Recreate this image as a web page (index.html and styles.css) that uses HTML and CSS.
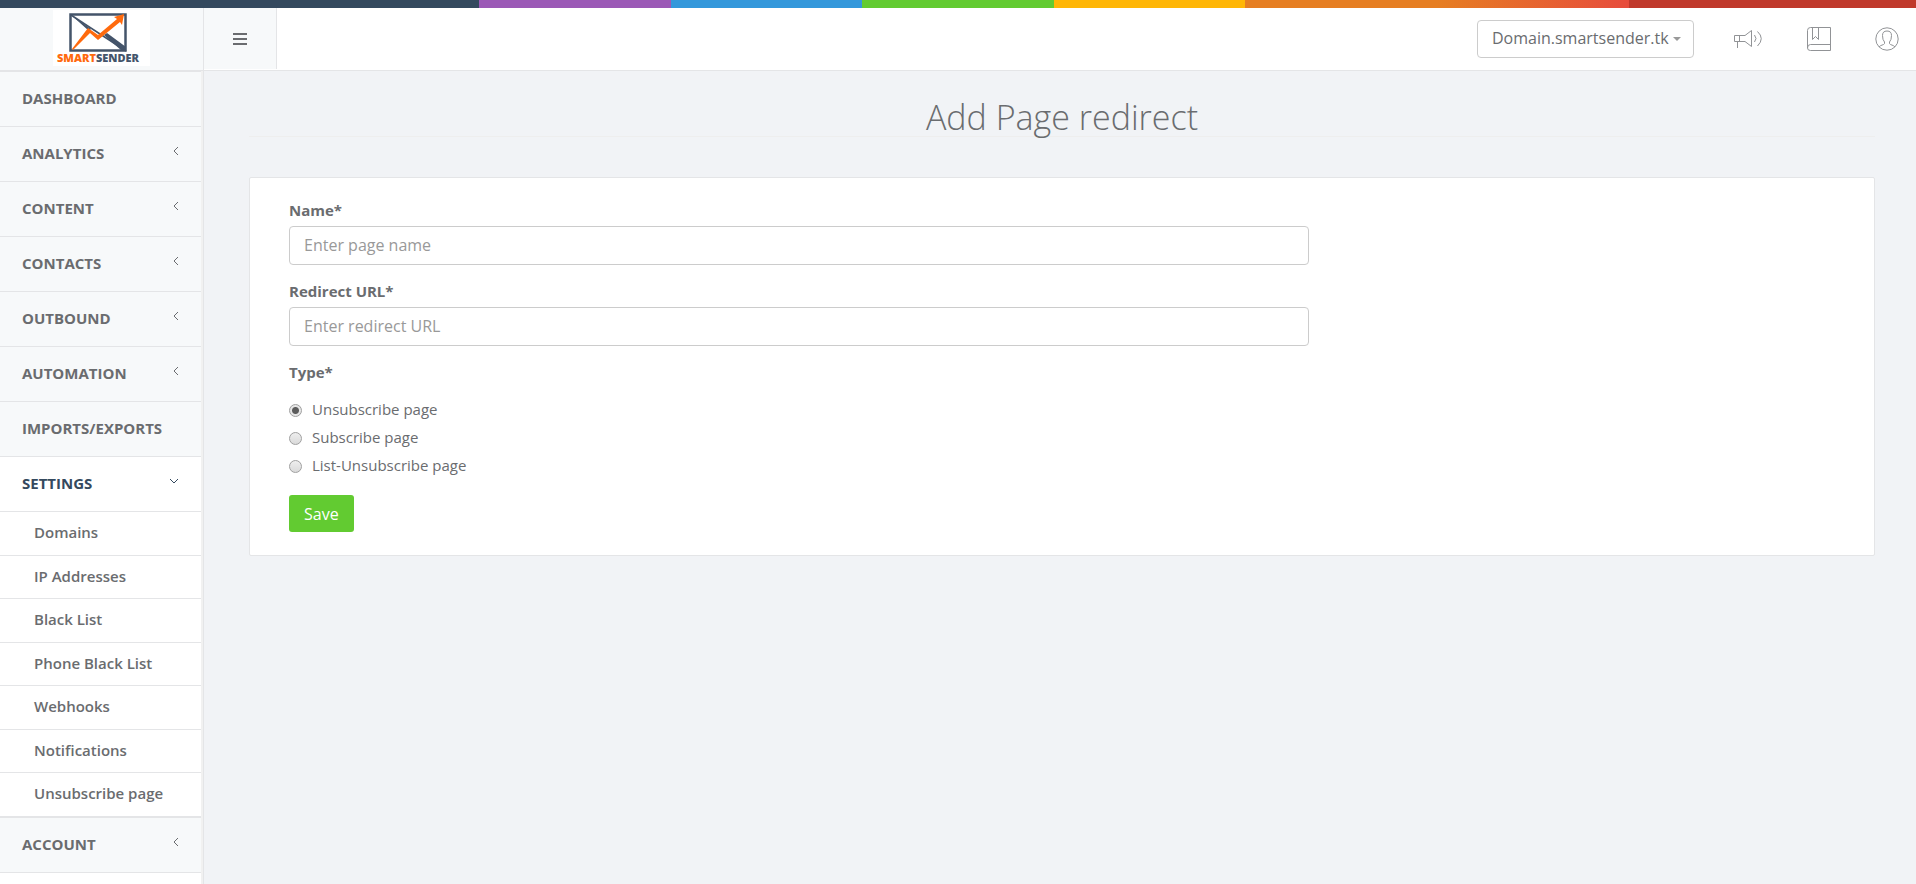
FILE: index.html
```
<!DOCTYPE html>
<html lang="en">
<head>
    <meta charset="UTF-8">
    <meta name="viewport" content="width=device-width, initial-scale=1.0">
    <title>Add Page redirect</title>
    <link rel="stylesheet" href="styles.css">
</head>
<body>

    <div class="color-line"></div>

    <header class="header">
        <a href="#" class="logo" aria-label="SmartSender">
            <svg width="97" height="56" viewBox="0 0 97 56">
                <rect width="97" height="56" fill="#fff"/>
                <path d="M18 5 L73 41" stroke="#44546a" stroke-width="1.5"/>
                <path d="M17 4 L38 19 L36 21 Z M51 25 L54 23 L73 37 V41 H69 Z" fill="#44546a"/>
                <rect x="17.500" y="4.500" width="55" height="36" fill="none" stroke="#44546a" stroke-width="2.500"/>
                <path d="M19 39 L35 18 L45 25 L64 9 L61 7 L71 4 L69 15 L67 12 L45 30 L37 23 L20 40 Z" fill="#ff6a0d"/>
                <text x="4" y="52" class="logo-text"><tspan fill="#ff6a0d">SMART</tspan><tspan fill="#44546a">SENDER</tspan></text>
            </svg>
        </a>
        <button type="button" class="menu-toggle" aria-label="Toggle menu">
            <svg width="14" height="12" viewBox="0 0 14 12" fill="#6a6c6f">
                <path d="M0 0h14v2H0zM0 5h14v2H0zM0 10h14v2H0z"/>
            </svg>
        </button>
        <nav class="header-nav">
            <div class="domain">
                <select class="domain-select" aria-label="Domain">
                    <option>Domain.smartsender.tk</option>
                </select>
            </div>
            <a href="#" class="nav-icon" aria-label="News">
                <svg width="30" height="24" viewBox="0 0 30 24">
                    <path d="M1.500 8.500H12L18.500 3.500V19.500L12 14.500H1.500ZM6.500 8.500V14.500M4.500 14.500V21M21.500 8Q24.500 11.500 21.500 15M24.500 4.500Q32 11.500 24.500 19"/>
                </svg>
            </a>
            <a href="#" class="nav-icon" aria-label="Documentation">
                <svg width="24" height="24" viewBox="0 0 24 24">
                    <path d="M23.500 18V.5H3.500Q.5 .5 .5 3.500V21Q.5 23.500 3.500 23.500H23.500V17.500H3.500Q.5 17.500 .5 21M5.500 .5V12.500L8.500 9.500L11.500 12.500V.5"/>
                </svg>
            </a>
            <a href="#" class="nav-icon" aria-label="Profile">
                <svg width="24" height="24" viewBox="0 0 24 24">
                    <circle cx="12" cy="12" r="11.200"/>
                    <path d="M4 20Q5 18.500 8.500 17.500Q10 17 9.500 15Q7.500 13 7.500 8.500Q7.500 4 12 4Q16.500 4 16.500 8.500Q16.500 13 14.500 15Q14 17 15.500 17.500Q19 18.500 20 20"/>
                </svg>
            </a>
        </nav>
    </header>

    <div class="wrapper">
        <aside class="sidebar">
            <ul class="menu">
                <li><a href="#">DASHBOARD</a></li>
                <li><a href="#">ANALYTICS <svg class="arrow" viewBox="0 0 10 10"><path d="M7 1L3 5L7 9"/></svg></a></li>
                <li><a href="#">CONTENT <svg class="arrow" viewBox="0 0 10 10"><path d="M7 1L3 5L7 9"/></svg></a></li>
                <li><a href="#">CONTACTS <svg class="arrow" viewBox="0 0 10 10"><path d="M7 1L3 5L7 9"/></svg></a></li>
                <li><a href="#">OUTBOUND <svg class="arrow" viewBox="0 0 10 10"><path d="M7 1L3 5L7 9"/></svg></a></li>
                <li><a href="#">AUTOMATION <svg class="arrow" viewBox="0 0 10 10"><path d="M7 1L3 5L7 9"/></svg></a></li>
                <li><a href="#">IMPORTS/EXPORTS</a></li>
                <li class="active">
                    <a href="#">SETTINGS <svg class="arrow" viewBox="0 0 10 10"><path d="M-1 3L3 7L7 3"/></svg></a>
                    <ul class="submenu">
                        <li><a href="#">Domains</a></li>
                        <li><a href="#">IP Addresses</a></li>
                        <li><a href="#">Black List</a></li>
                        <li><a href="#">Phone Black List</a></li>
                        <li><a href="#">Webhooks</a></li>
                        <li><a href="#">Notifications</a></li>
                        <li><a href="#">Unsubscribe page</a></li>
                    </ul>
                </li>
                <li><a href="#">ACCOUNT <svg class="arrow" viewBox="0 0 10 10"><path d="M7 1L3 5L7 9"/></svg></a></li>
            </ul>
        </aside>

        <main class="content">
            <h1>Add Page redirect</h1>
            <form class="panel">
                <div class="form-group">
                    <label for="name">Name*</label>
                    <input type="text" id="name" placeholder="Enter page name">
                </div>
                <div class="form-group">
                    <label for="url">Redirect URL*</label>
                    <input type="text" id="url" placeholder="Enter redirect URL">
                </div>
                <fieldset class="types">
                    <legend>Type*</legend>
                    <label class="radio"><input type="radio" name="type" checked> Unsubscribe page</label>
                    <label class="radio"><input type="radio" name="type"> Subscribe page</label>
                    <label class="radio"><input type="radio" name="type"> List-Unsubscribe page</label>
                </fieldset>
                <button type="submit" class="btn-save">Save</button>
            </form>
        </main>
    </div>

</body>
</html>
```
FILE: styles.css
```
* { box-sizing: border-box; }
body { margin: 0; min-height: 100vh; display: flex; flex-direction: column; background: #f1f3f6; color: #6a6c6f; font-family: "Open Sans", "Liberation Sans", sans-serif; font-size: 15px; }
a { color: inherit; text-decoration: none; }
ul { list-style: none; margin: 0; padding: 0; }

.color-line { height: 8px; flex: none; background: linear-gradient(to right, #34495e 25%, #9b59b6 25%, #9b59b6 35%, #3498db 35%, #3498db 45%, #62cb31 45%, #62cb31 55%, #ffb606 55%, #ffb606 65%, #e67e22 65%, #e67e22 75%, #e74c3c 85%, #c0392b 85%); }

/* header */
.header { display: flex; height: 63px; background: #fff; border-bottom: 1px solid #e4e5e7; }
.logo { width: 204px; padding: 2px 0 0 53px; background: #f7f9fa; border-right: 1px solid #e4e5e7; }
.logo svg { display: block; }
.logo-text { font-size: 11px; font-weight: 800; }
.menu-toggle { width: 73px; margin-bottom: 1px; padding: 3px 0 0; border: 0; border-right: 1px solid #e4e5e7; background: #f7f9fa; }
.header-nav { display: flex; align-items: center; margin-left: auto; padding-right: 17px; }
.domain { position: relative; margin-right: 39px; }
.domain::after { content: ""; position: absolute; right: 13px; top: 17px; border: 4px solid transparent; border-top-color: #999; border-bottom: 0; pointer-events: none; }
.domain-select { display: block; appearance: none; width: 217px; height: 38px; padding: 0 14px 2px; border: 1px solid #ccc; border-radius: 4px; background: #fff; color: inherit; font: inherit; font-size: 16px; }
.nav-icon { margin-right: 44px; }
.nav-icon:last-child { margin-right: 0; }
.nav-icon svg { display: block; fill: none; stroke: #919396; stroke-width: 1; }

.wrapper { display: flex; flex: 1; }

/* sidebar */
.sidebar { width: 204px; flex: none; background: #fff; border-right: 1px solid #e4e5e7; box-shadow: inset -2px 0 #f1f1f1; padding-right: 2px; }
.menu { border-top: 1px solid #e4e5e7; }
.menu > li { background: #f7f9fa; border-bottom: 1px solid #e4e5e7; }
.menu > li > a { display: flex; justify-content: space-between; padding: 15px 20px 17px 22px; line-height: 22px; font-weight: 700; }
.menu > li.active { background: #fff; }
.menu > li.active > a { color: #34495e; }
.arrow { width: 10px; height: 10px; margin-top: 4px; fill: none; stroke: currentColor; stroke-width: 1; overflow: visible; }
.submenu { border-bottom: 1px solid #e4e5e7; }
.submenu a { display: block; padding: 9px 34px 11px; border-top: 1px solid #e4e5e7; line-height: 1.5; font-weight: 600; }

/* page */
.content { flex: 1; padding: 28px 41px 40px 45px; }
h1 { margin: 0 0 40px; border-bottom: 1px solid #eee; font-size: 34px; font-weight: 300; line-height: 37px; text-align: center; }
.panel { padding: 21px 39px 23px; background: #fff; border: 1px solid #e4e5e7; border-radius: 2px; }
.form-group { width: 66%; margin-bottom: 15px; }
.form-group label { display: block; margin-bottom: 5px; line-height: 22px; font-weight: 700; }
.form-group input { display: block; width: 100%; height: 39px; padding: 0 14px 2px; border: 1px solid #ccc; border-radius: 4px; background: #fff; color: inherit; font: inherit; font-size: 16px; }
.form-group input::placeholder { color: #999; opacity: 1; }
.types { margin: 0 0 16px; padding: 0; border: 0; }
.types legend { margin-bottom: 12px; padding: 0; line-height: 22px; font-weight: 700; }
.radio { display: flex; align-items: center; height: 28px; }
.radio input { appearance: none; width: 13px; height: 13px; margin: 2px 10px 0 0; border: 1px solid #a0a0a0; border-radius: 50%; background: linear-gradient(#eee, #dadada); }
.radio input:checked { background: radial-gradient(circle, #5c5c5c 3px, #e6e6e6 4px); }
.btn-save { display: block; height: 37px; padding: 0 15px; border: 0; border-radius: 3px; background: #62cb31; color: #fff; font: inherit; font-size: 16px; }
```
